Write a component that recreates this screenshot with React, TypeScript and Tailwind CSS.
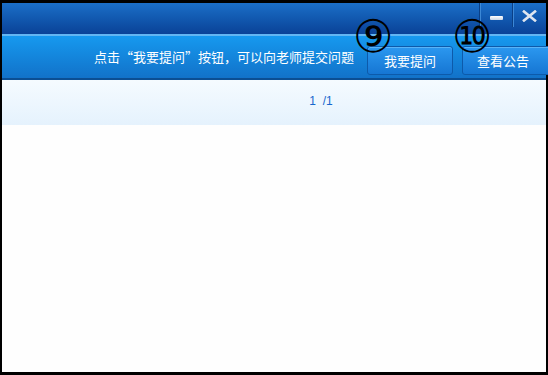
export default function App() {
  const cjk = { fontFamily: '"SimSun", "Noto Sans CJK SC", sans-serif' };
  return (
    <div className="w-[548px] h-[375px] bg-black pt-[3px] pl-[2px] pr-[2px] pb-[3px] overflow-hidden">
      <div className="relative w-full h-full flex flex-col bg-[#fefefe]" style={cjk}>
        {/* Title bar */}
        <div className="h-[31px] flex justify-end bg-gradient-to-b from-[#1b6fc8] to-[#0a4297]">
          <div className="w-[33px] h-[24px] flex items-center justify-center border-l border-[#0a3f86] shadow-[inset_1px_0_0_#3c88d6]">
            <div className="w-[13px] h-[4px] bg-gradient-to-b from-white to-[#c9d6e6] rounded-[1px] mt-[6px]" />
          </div>
          <div className="w-[34px] h-[24px] flex items-center justify-center border-l border-[#0a3f86] shadow-[inset_1px_0_0_#3c88d6]">
            <svg width="15" height="12" viewBox="0 0 15 12" className="mt-[2px]">
              <path d="M2 1.5 L13 10.5 M13 1.5 L2 10.5" stroke="#dfe6f0" strokeWidth="2.6" strokeLinecap="square" />
            </svg>
          </div>
        </div>
        <div className="h-[2px] bg-[#63b6f2]" />
        {/* Toolbar */}
        <div className="h-[42px] flex items-center bg-gradient-to-b from-[#1699ef] to-[#1272c9]">
          <span className="ml-[92px] text-[13px] text-white whitespace-nowrap">
            点击“我要提问”按钮，可以向老师提交问题
          </span>
          <button className="ml-[13px] w-[86px] h-[29px] mt-[7px] rounded-[3px] border border-[#0d5aaa] bg-gradient-to-b from-[#2b98f0] to-[#1676d3] text-white text-[13px] shadow-[inset_0_1px_0_#59b3f7] shrink-0">
            我要提问
          </button>
          <button className="ml-[9px] w-[90px] h-[29px] mt-[7px] rounded-[3px] border border-[#0d5aaa] bg-gradient-to-b from-[#2b98f0] to-[#1676d3] text-white text-[13px] text-left pl-[14px] shadow-[inset_0_1px_0_#59b3f7] shrink-0">
            查看公告
          </button>
        </div>
        <div className="h-[2px] bg-[#0b4e93]" />
        {/* Pager band */}
        <div className="h-[45px] flex justify-center pt-[12px] bg-gradient-to-b from-[#f5fbff] to-[#e5f2fd]">
          <span className="text-[12px] text-[#1666cc] ml-[94px]" style={{ fontFamily: '"Liberation Sans", sans-serif' }}>
            1&nbsp;&nbsp;/1
          </span>
        </div>
        <div className="flex-1 bg-[#fefefe]" />
        {/* Annotations */}
        <span className="absolute left-[351px] top-[11px] text-[45px] leading-none text-black" style={{ fontFamily: '"DejaVu Sans", sans-serif' }}>
          ⑨
        </span>
        <span className="absolute left-[450px] top-[11px] text-[45px] leading-none text-black" style={{ fontFamily: '"DejaVu Sans", sans-serif' }}>
          ⑩
        </span>
      </div>
    </div>
  );
}
